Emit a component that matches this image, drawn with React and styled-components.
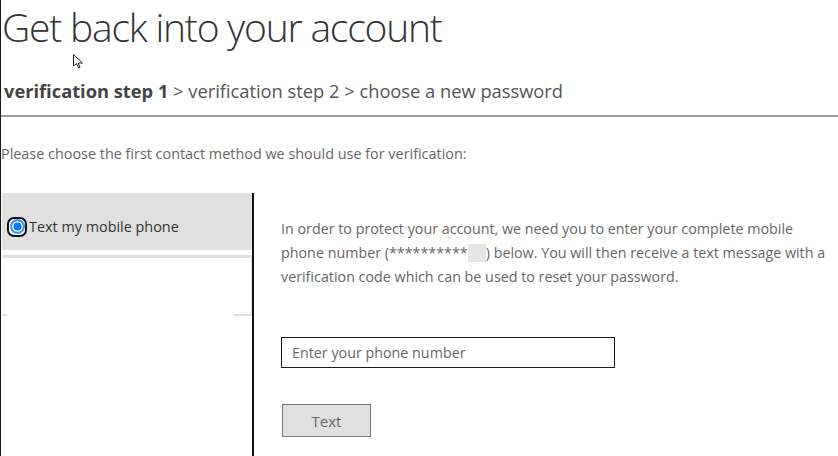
import React from "react";
import styled, { createGlobalStyle } from "styled-components";

const GlobalStyle = createGlobalStyle`
  html, body {
    margin: 0;
    padding: 0;
    background: #fff;
  }
  body {
    font-family: "Segoe UI", "Open Sans", "Noto Sans", sans-serif;
  }
`;

const Page = styled.div`
  position: relative;
  width: 838px;
  height: 456px;
  overflow: hidden;
  box-sizing: border-box;
  border-left: 1px solid #1a1a1a;
`;

const Title = styled.h1`
  margin: 0;
  padding: 3px 0 0 1px;
  font-size: 39px;
  line-height: 48px;
  font-weight: 300;
  color: #333;
  letter-spacing: -1.2px;
`;

const Steps = styled.div`
  margin-top: 27px;
  padding-left: 3px;
  font-size: 18.3px;
  line-height: 26px;
  color: #555;
`;

const Current = styled.span`
  font-weight: 700;
  color: #444;
`;

const Divider = styled.hr`
  margin: 11px 0 0;
  border: 0;
  border-top: 2px solid #9a9a9a;
`;

const Intro = styled.p`
  margin: 27px 0 0;
  font-size: 14.4px;
  line-height: 20px;
  color: #666;
`;

const Columns = styled.div`
  display: flex;
  margin-top: 29px;
`;

const Options = styled.div`
  width: 250px;
  padding-left: 1px;
  border-right: 2px solid #111;
  height: 280px;
`;

const Option = styled.label`
  display: flex;
  align-items: center;
  box-sizing: border-box;
  height: 57px;
  padding: 10px 0 0 5px;
  background: #e0e0e0;
  font-size: 14.4px;
  color: #333;
  border-right: 1px solid #e0e0e0;
`;

const Radio = styled.span`
  box-sizing: border-box;
  width: 20px;
  height: 20px;
  border-radius: 7px;
  border: 2px solid #111;
  display: flex;
  align-items: center;
  justify-content: center;
  margin-right: 2px;
  background: #fff;

  &::after {
    content: "";
    width: 15px;
    height: 15px;
    border-radius: 50%;
    box-sizing: border-box;
    background: #0a79f5;
    border: 2px solid #3c95ff;
    box-shadow: inset 0 0 0 1.5px #fff;
  }
`;

const EmptyOption = styled.div`
  position: relative;
  margin-top: 5px;
  height: 58px;
  border-top: 3px solid #e0e0e0;
  border-right: 1px solid #e0e0e0;

  &::before,
  &::after {
    content: "";
    position: absolute;
    bottom: 0;
    height: 2px;
    background: #e0e0e0;
  }
  &::before {
    left: 0;
    width: 5px;
  }
  &::after {
    right: 0;
    width: 18px;
  }
`;

const Detail = styled.div`
  flex: 1;
  padding: 24px 0 0 27px;
`;

const Message = styled.p`
  margin: 0;
  width: 548px;
  font-size: 14.3px;
  line-height: 24px;
  color: #666;
`;

const Masked = styled.span`
  display: inline-block;
  width: 18px;
  height: 18px;
  vertical-align: -4px;
  background: #e6e6e6;
`;

const PhoneInput = styled.input`
  display: block;
  box-sizing: border-box;
  margin-top: 48px;
  width: 334px;
  height: 31px;
  padding: 0 10px;
  border: 1px solid #1a1a1a;
  font-family: inherit;
  font-size: 14.3px;
  color: #333;
  outline: none;

  &::placeholder {
    color: #666;
  }
`;

const SendButton = styled.button`
  display: block;
  box-sizing: border-box;
  margin-top: 36px;
  margin-left: 1px;
  width: 89px;
  height: 33px;
  background: #e0e0e0;
  border: 1px solid #777;
  font-family: inherit;
  font-size: 15px;
  color: #666;
`;

const Pointer = styled.svg`
  position: absolute;
  left: 72px;
  top: 54px;
`;

export default function App() {
  return (
    <Page>
      <GlobalStyle />
      <Title>Get back into your account</Title>
      <Steps>
        <Current>verification step 1</Current> &gt; verification step 2 &gt;
        choose a new password
      </Steps>
      <Divider />
      <Intro>
        Please choose the first contact method we should use for verification:
      </Intro>
      <Columns>
        <Options>
          <Option>
            <Radio />
            Text my mobile phone
          </Option>
          <EmptyOption />
        </Options>
        <Detail>
          <Message>
            In order to protect your account, we need you to enter your complete
            mobile phone number (**********
            <Masked />) below. You will then receive a text message with a
            verification code which can be used to reset your password.
          </Message>
          <PhoneInput placeholder="Enter your phone number" />
          <SendButton>Text</SendButton>
        </Detail>
      </Columns>
      <Pointer width="12" height="16" viewBox="0 0 12 16">
        <path
          d="M0.5 0.5 L0.5 12 L3.5 9.5 L5.5 14 L7 13.3 L5.2 9 L9.5 9 Z"
          fill="#fff"
          stroke="#222"
          strokeWidth="1"
        />
      </Pointer>
    </Page>
  );
}
